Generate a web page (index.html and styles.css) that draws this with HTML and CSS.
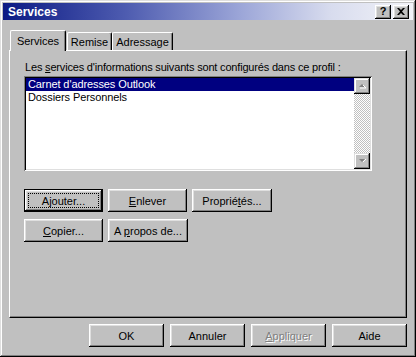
FILE: index.html
```html
<!DOCTYPE html>
<html lang="fr">
<head>
  <meta charset="UTF-8">
  <title>Services</title>
  <link rel="stylesheet" href="styles.css">
</head>
<body>
  <div class="window">
    <!-- Title bar -->
    <div class="titlebar">
      <span class="title">Services</span>
      <div class="title-buttons">
        <span class="tbtn help">?</span>
        <span class="tbtn close">
          <svg width="8" height="7" viewBox="0 0 8 7"><path d="M0 0h2l2 2 2-2h2L5 3.5 8 7H6L4 5 2 7H0l3-3.5z" fill="#000"/></svg>
        </span>
      </div>
    </div>

    <div class="dialog">
      <div class="tabs">
        <div class="tab active">Services</div>
        <div class="tab tab-remise">Remise</div>
        <div class="tab tab-adressage">Adressage</div>
      </div>

      <div class="panel">
        <p class="label">Les <u>s</u>ervices d'informations suivants sont configurés dans ce profil :</p>

        <div class="listbox">
          <ul class="items">
            <li class="selected">Carnet d'adresses Outlook</li>
            <li>Dossiers Personnels</li>
          </ul>
          <div class="scrollbar">
            <span class="sbtn">
              <svg width="9" height="6" viewBox="0 0 9 6"><path d="M4 1 1 4h6z" fill="#808080"/><path d="M2 5h6L5 2" fill="none" stroke="#fff" stroke-width="1"/></svg>
            </span>
            <span class="track"></span>
            <span class="sbtn">
              <svg width="9" height="6" viewBox="0 0 9 6"><path d="M1 1h6L4 4z" fill="#808080"/><path d="M8 1 5 4" fill="none" stroke="#fff" stroke-width="1"/></svg>
            </span>
          </div>
        </div>

        <div class="btn-row">
          <button class="btn default w79"><span class="focus">A<u>j</u>outer...</span></button>
          <button class="btn w79"><span><u>E</u>nlever</span></button>
          <button class="btn w80"><span>Proprié<u>t</u>és...</span></button>
        </div>
        <div class="btn-row">
          <button class="btn w79"><span><u>C</u>opier...</span></button>
          <button class="btn w80"><span>A <u>p</u>ropos de...</span></button>
        </div>
      </div>

      <div class="footer">
        <button class="btn"><span>OK</span></button>
        <button class="btn"><span>Annuler</span></button>
        <button class="btn disabled"><span><u>A</u>ppliquer</span></button>
        <button class="btn"><span>Aide</span></button>
      </div>
    </div>
  </div>
</body>
</html>
```

FILE: styles.css
```css
* {
  box-sizing: border-box;
}

body {
  margin: 0;
  background: #c0c0c0;
  font-family: "Liberation Sans", Arial, sans-serif;
  font-size: 11px;
  color: #000;
}

.window {
  width: 416px;
  height: 357px;
  padding: 3px;
  background: #c0c0c0;
  box-shadow: inset -1px -1px #000, inset 1px 1px #dfdfdf,
    inset -2px -2px #808080, inset 2px 2px #fff;
}

/* Title bar */
.titlebar {
  height: 17px;
  display: flex;
  align-items: center;
  justify-content: space-between;
  padding: 0 4px 0 5px;
  background: linear-gradient(to right, #0c1a84 0%, #4e5cb0 30%, #9ca6d8 58%, #d8dcee 80%, #f2f3f8 100%);
}

.title {
  color: #fff;
  font-weight: bold;
  font-size: 12px;
}

.title-buttons {
  display: flex;
  gap: 2px;
}

.tbtn {
  width: 16px;
  height: 14px;
  display: flex;
  align-items: center;
  justify-content: center;
  background: #c0c0c0;
  font-weight: bold;
  font-size: 11px;
  line-height: 1;
  box-shadow: inset -1px -1px #000, inset 1px 1px #fff,
    inset -2px -2px #808080, inset 2px 2px #dfdfdf;
}

/* Tabs */
.dialog {
  padding-top: 9px;
}

.tabs {
  display: flex;
  align-items: flex-end;
  margin-left: 7px;
  height: 21px;
}

.tab {
  position: relative;
  height: 18px;
  padding: 3px 0 0;
  text-align: center;
  background: #c0c0c0;
  border-top: 1px solid #fff;
  border-left: 1px solid #fff;
  border-right: 1px solid #000;
  border-radius: 2px 2px 0 0;
  box-shadow: inset -1px 0 #808080;
}

.tab.active {
  width: 56px;
  height: 21px;
  margin-bottom: -1px;
  padding-top: 4px;
  z-index: 1;
}

.tab-remise {
  width: 45px;
  margin-left: 1px;
}

.tab-adressage {
  width: 61px;
}

/* Panel */
.panel {
  width: 398px;
  height: 268px;
  margin-left: 6px;
  padding: 10px 14px 0;
  border-top: 1px solid #fff;
  border-left: 1px solid #fff;
  border-right: 1px solid #000;
  border-bottom: 1px solid #000;
  box-shadow: inset -1px -1px #808080;
}

.label {
  margin: 0 0 2px 1px;
  line-height: 13px;
  letter-spacing: -0.18px;
}

/* List box */
.listbox {
  width: 348px;
  height: 95px;
  display: flex;
  padding: 2px;
  background: #fff;
  box-shadow: inset 1px 1px #808080, inset -1px -1px #fff,
    inset 2px 2px #000, inset -2px -2px #dfdfdf;
}

.items {
  flex: 1;
  margin: 0;
  padding: 0;
  list-style: none;
}

.items li {
  height: 13px;
  line-height: 13px;
  padding-left: 2px;
  letter-spacing: -0.1px;
}

.items li.selected {
  background: #000080;
  color: #fff;
}

.scrollbar {
  width: 16px;
  display: flex;
  flex-direction: column;
}

.sbtn {
  height: 16px;
  display: flex;
  align-items: center;
  justify-content: center;
  background: #c0c0c0;
  box-shadow: inset -1px -1px #000, inset 1px 1px #dfdfdf,
    inset -2px -2px #808080, inset 2px 2px #fff;
}

.track {
  flex: 1;
  background: repeating-conic-gradient(#fff 0 25%, #c0c0c0 0 50%) 0 0 / 2px 2px;
}

/* Buttons */
.btn-row {
  display: flex;
  gap: 5px;
  margin-top: 18px;
}

.btn-row + .btn-row {
  margin-top: 7px;
}

.btn {
  width: 75px;
  height: 23px;
  padding: 0;
  border: none;
  background: #c0c0c0;
  font-family: inherit;
  font-size: 11px;
  color: #000;
  display: flex;
  align-items: center;
  justify-content: center;
  box-shadow: inset -1px -1px #000, inset 1px 1px #fff,
    inset -2px -2px #808080, inset 2px 2px #dfdfdf;
}

.btn.default {
  border: 1px solid #000;
}

.btn .focus {
  display: flex;
  align-items: center;
  justify-content: center;
  width: 71px;
  height: 15px;
  outline: 1px dotted #000;
  outline-offset: -1px;
}

.w79 { width: 79px; }
.w80 { width: 80px; }

.btn.disabled {
  color: #808080;
  text-shadow: 1px 1px #fff;
}

.footer {
  display: flex;
  justify-content: flex-end;
  gap: 6px;
  margin-top: 6px;
  padding-right: 6px;
}
```
